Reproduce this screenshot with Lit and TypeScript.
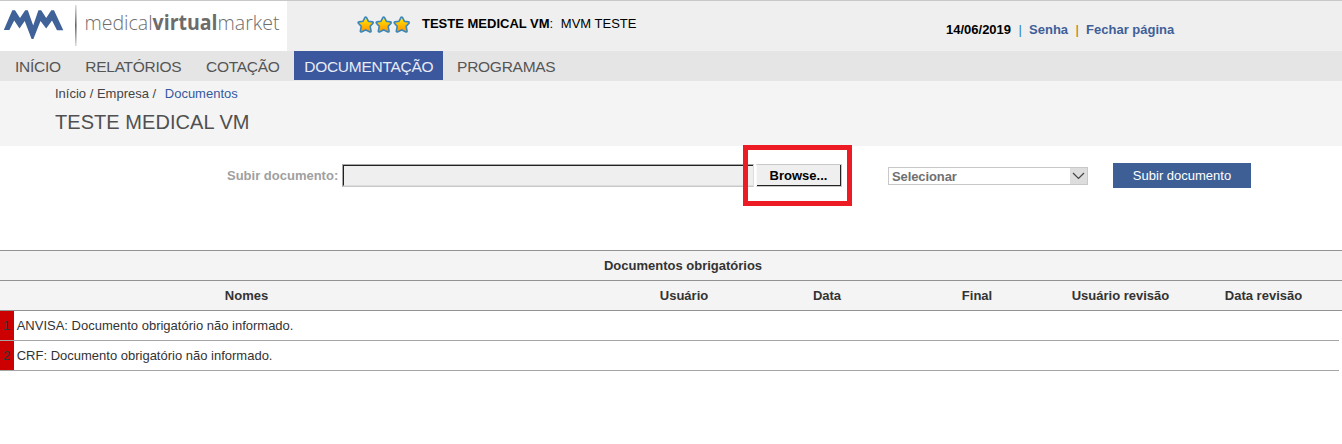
import { LitElement, html, css, svg } from "lit";
import { customElement } from "lit/decorators.js";

const menu = ["INÍCIO", "RELATÓRIOS", "COTAÇÃO", "DOCUMENTAÇÃO", "PROGRAMAS"];
const active = "DOCUMENTAÇÃO";
const rows = [
  "ANVISA: Documento obrigatório não informado.",
  "CRF: Documento obrigatório não informado.",
];

const star = (x: number) => svg`
  <path transform="translate(${x} 0)" d="M8.7 2.8 L10.9 7 L15.4 7.7 L12.3 11.1 L13.3 16.2 L8.7 14.1 L4.1 16.2 L5.1 11.1 L2 7.7 L6.5 7 Z"
    fill="url(#gold)" stroke="#3b87bb" stroke-width="3.2" stroke-linejoin="round" paint-order="stroke"/>`;

@customElement("app-root")
export class AppRoot extends LitElement {
  static styles = css`
    :host { display: block; height: 444px; background: #fff; overflow: hidden; font: 13px/15px "Liberation Sans", Arial, sans-serif; color: #333; white-space: nowrap; }
    * { box-sizing: border-box; }
    a { color: inherit; text-decoration: none; }
    header { display: flex; height: 51px; border-top: 1px solid #c8c8c8; background: #efefef; color: #000; }
    .logo { width: 287px; height: 50px; background: #fff; flex: none; }
    .logo svg { display: block; }
    .logo text { font-family: "Open Sans", sans-serif; font-size: 20.5px; font-weight: 300; fill: #6e6e6e; }
    .logo tspan { font-weight: 700; fill: #6c6c6c; }
    .stars { margin: 14px 0 0 70px; flex: none; }
    .company { margin: 15px 0 0 11px; width: 524px; flex: none; }
    .company span { margin-left: 4px; }
    .session { margin-top: 21px; display: flex; font-weight: bold; }
    .session a { color: #3f5f98; }
    .bar { width: 18px; text-align: center; font-weight: normal; color: #2a7fb5; }
    .bar.warm { color: #b86a10; }
    nav { display: flex; height: 30px; background: #e5e5e5; padding-left: 5px; font-size: 15.5px; letter-spacing: -.27px; line-height: 31px; color: #555; }
    nav a { padding: 0 10px; height: 29px; margin-right: 4.6px; }
    nav a.on { background: #3b579d; color: #e8ecf5; margin-right: 3.8px; }
    .title { height: 65px; background: #f4f4f4; padding: 5px 0 0 55px; color: #444; }
    .crumb a { color: #3559a0; margin-left: 5px; }
    h1 { margin: 9px 0 0; font-size: 20px; line-height: 24px; letter-spacing: .05px; font-weight: normal; color: #505050; }
    .upload { display: flex; height: 104px; padding: 17px 0 0 227px; align-items: flex-start; }
    label { width: 115px; margin-top: 5px; font-weight: bold; color: #a0a0a0; }
    .file { display: flex; width: 500px; height: 24px; margin-top: 1px; position: relative; }
    .path { width: 412px; height: 23px; background: #efefef; border: 1px solid #a5a5a5; border-right-color: #ddd; border-bottom-color: #c8c8c8; }
    .path i { display: block; height: 21px; border: solid #222; border-width: 1px 0 1px 1px; border-bottom-color: #ddd; }
    .browse { width: 86px; height: 23px; margin-left: 2px; background: #efefef; border: 1px solid #c8c8c8; border-left-color: #fafafa; }
    .browse b { display: block; height: 21px; border: solid #222; border-width: 0 1px 1px 0; text-align: center; line-height: 22px; color: #000; }
    .mark { position: absolute; left: 401px; top: -19px; width: 109px; height: 61px; border: 5px solid #ed1c24; }
    .select { display: flex; justify-content: space-between; width: 200px; height: 18px; margin: 4px 0 0 46px; border: 1px solid #c8c8c8; padding-left: 3px; line-height: 18px; font-weight: bold; letter-spacing: -.1px; color: #707070; }
    .select svg { background: #ddd; }
    button { width: 138px; height: 25px; margin-left: 25px; padding: 0; border: 0; background: #3d5f95; color: #fff; font: inherit; }
    .head { border-top: 1px solid #929292; height: 30px; background: #f4f4f4; text-align: center; font-weight: bold; line-height: 30px; }
    .group { padding-left: 24px; }
    .cols { display: grid; grid-template-columns: 493px 119px 144px 142px 158px 129px 157px; }
    .cols .user { grid-column: 3; }
    .rows { border-top: 1px solid #929292; }
    .row { display: flex; width: 1339px; height: 30px; border-bottom: 1px solid #a5a5a5; line-height: 29px; }
    .num { width: 14px; margin-right: 2.7px; background: #c00; padding-left: 3px; }
  `;

  render() {
    return html`
      <header>
        <div class="logo">
          <svg width="287" height="50">
            <defs><linearGradient id="rule" x2="0" y2="1"><stop stop-color="#ddd"/><stop offset=".5" stop-color="#666"/><stop offset="1" stop-color="#ddd"/></linearGradient></defs>
            <path d="M3.8 29 L12.3 9.3 L15 9.3 L20 17 L25.2 9.3 L27.8 9.3 L33.2 24.5 L38.4 9.3 L41.2 9.3 L46.2 17 L51.3 9.3 L54 9.3 L63.3 29.2 L57 29.2 L52 19.5 L46.2 27.5 L40.5 20 L33.4 38 L31.6 38 L24.7 20 L19.5 27.5 L14.2 19.5 L9.4 29 Z" fill="#3f6298"/>
            <path d="M75 4h1.6v41H75z" fill="url(#rule)"/>
            <text x="84.5" y="28.6" textLength="195" lengthAdjust="spacingAndGlyphs">medical<tspan>virtual</tspan>market</text>
          </svg>
        </div>
        <svg class="stars" width="54" height="20">
          <defs><linearGradient id="gold" x2="0" y2="1"><stop stop-color="#ffe900"/><stop offset="1" stop-color="#ff9500"/></linearGradient></defs>
          ${star(0)}${star(18)}${star(36)}
        </svg>
        <div class="company"><b>TESTE MEDICAL VM</b>: <span>MVM TESTE</span></div>
        <div class="session"><span>14/06/2019</span><span class="bar">|</span><a href="#">Senha</a><span class="bar warm">|</span><a href="#">Fechar página</a></div>
      </header>
      <nav>${menu.map((m) => html`<a href="#" class=${m === active ? "on" : ""}>${m}</a>`)}</nav>
      <section class="title">
        <div class="crumb">Início / Empresa / <a href="#">Documentos</a></div>
        <h1>TESTE MEDICAL VM</h1>
      </section>
      <section class="upload">
        <label>Subir documento:</label>
        <div class="file">
          <div class="path"><i></i></div>
          <div class="browse"><b>Browse...</b></div>
          <div class="mark"></div>
        </div>
        <div class="select"><span>Selecionar</span><svg width="17" height="16"><path d="M3 5 8.5 10.5 14 5" fill="none" stroke="#444" stroke-width="1.2"/></svg></div>
        <button>Subir documento</button>
      </section>
      <div class="head group">Documentos obrigatórios</div>
      <div class="head cols"><span>Nomes</span><span class="user">Usuário</span><span>Data</span><span>Final</span><span>Usuário revisão</span><span>Data revisão</span></div>
      <div class="rows">${rows.map((r, i) => html`<div class="row"><span class="num">${i + 1}</span><span>${r}</span></div>`)}</div>
    `;
  }
}
